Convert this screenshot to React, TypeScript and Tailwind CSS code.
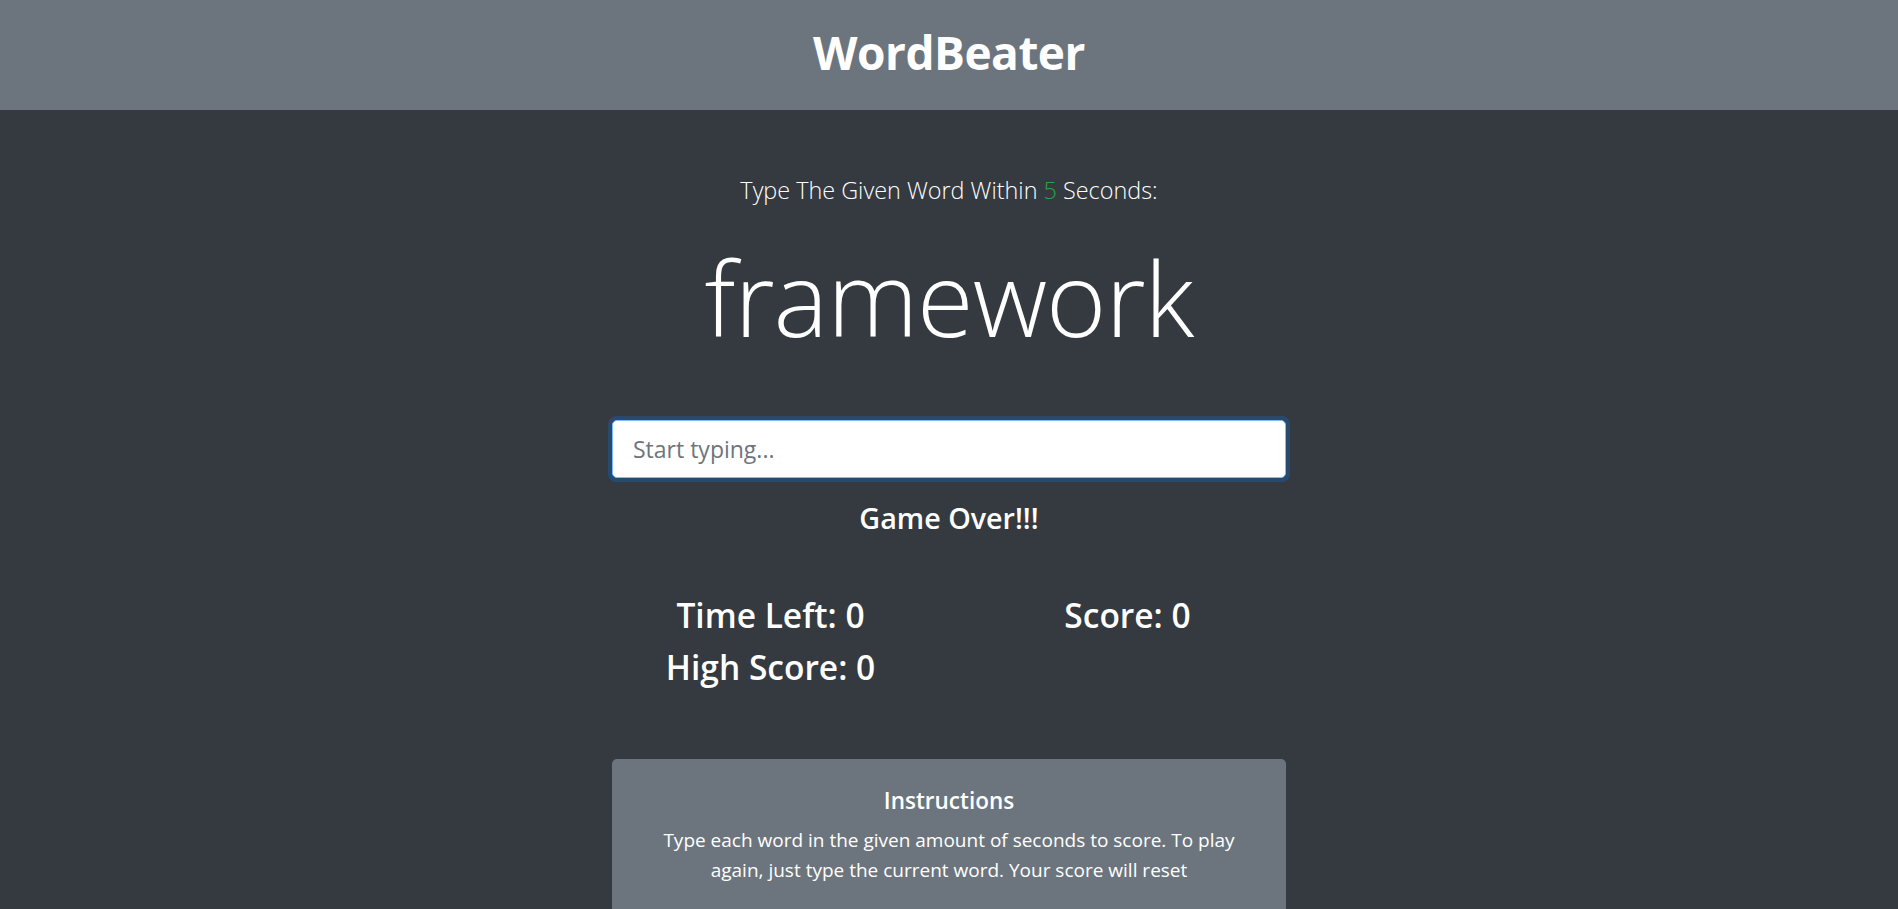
import React from "react";

const font = { fontFamily: '"Open Sans", "Noto Sans", sans-serif' };

export default function App() {
  return (
    <div className="min-h-screen bg-[#343a40] text-white" style={font}>
      <header className="flex h-[110px] items-center justify-center bg-[#6c757d] pb-[6px]">
        <h1 className="text-[46px] font-bold leading-none tracking-[-0.5px]">WordBeater</h1>
      </header>

      <main className="flex flex-col items-center">
        <p className="mt-[62px] text-[23.4px] font-light leading-[36px]">
          Type The Given Word Within <span className="text-[#28a745]">5</span> Seconds:
        </p>
        <h2 className="mt-[20px] text-[103px] font-light leading-[138px] tracking-[-1px]">framework</h2>

        <div className="mt-[50px] w-[682px] rounded-[8px] bg-[#2a4a6d] p-[4px]">
          <input
            className="h-[58px] w-full rounded-[5px] border border-[#80bdff] bg-white px-[20px] text-[23px] text-[#495057] outline-none placeholder:text-[#6c757d]"
            placeholder="Start typing..."
          />
        </div>

        <h4 className="mt-[18px] text-[28.7px] font-semibold leading-[35px]">Game Over!!!</h4>

        <div className="mt-[60px] grid w-[714px] grid-cols-2 text-center">
          <div className="flex flex-col gap-[12px]">
            <h3 className="text-[33.5px] font-semibold leading-[40px]">Time Left: 0</h3>
            <h3 className="text-[33.5px] font-semibold leading-[40px]">High Score: 0</h3>
          </div>
          <div>
            <h3 className="text-[33.5px] font-semibold leading-[40px]">Score: 0</h3>
          </div>
        </div>

        <div className="mt-[72px] mb-[40px] w-[674px] rounded-[5px] bg-[#6c757d] px-[24px] pt-[27px] pb-[36px] text-center">
          <h5 className="mb-[10px] text-[22.5px] font-semibold leading-[29px]">Instructions</h5>
          <p className="text-[19px] leading-[30px]">
            Type each word in the given amount of seconds to score. To play again, just type the current word. Your score will reset
          </p>
        </div>
      </main>
    </div>
  );
}
